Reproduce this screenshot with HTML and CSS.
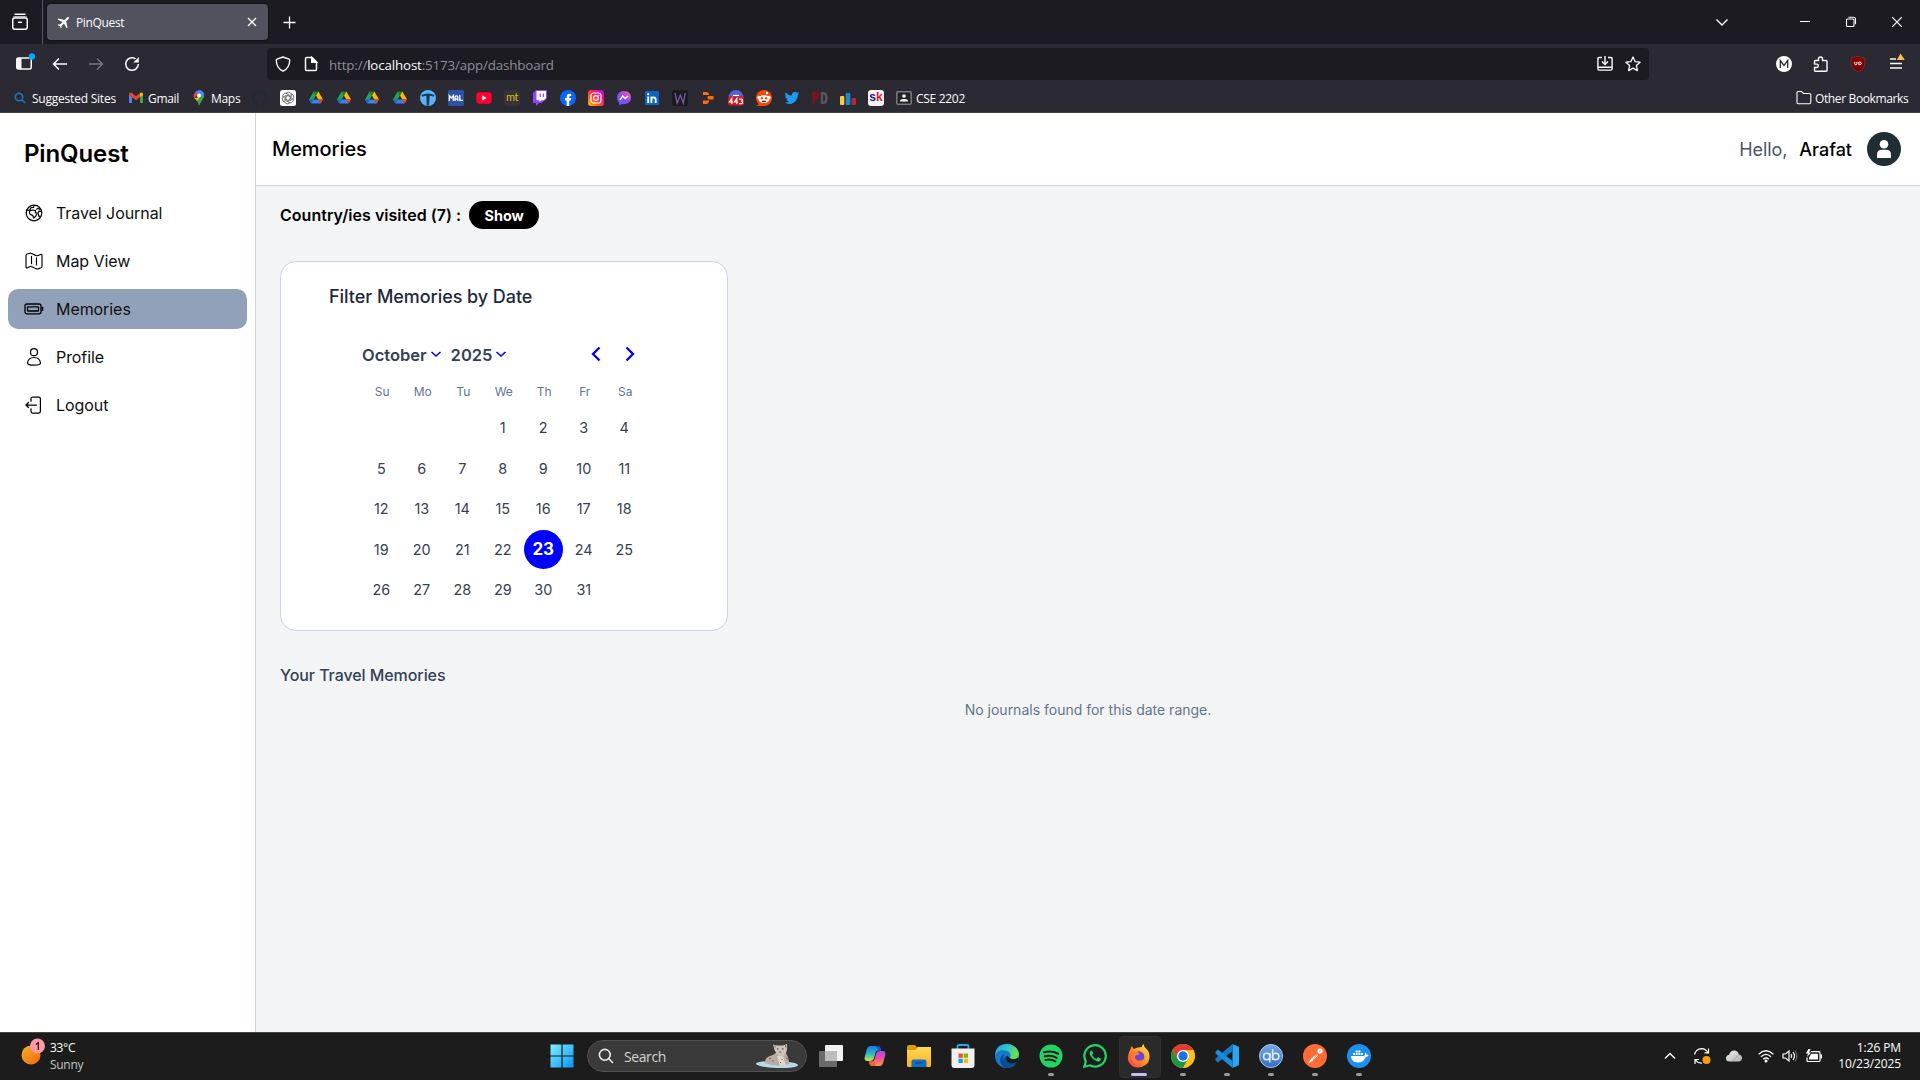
FILE: index.html
```html
<!DOCTYPE html>
<html lang="en">
<head>
<meta charset="utf-8">
<title>PinQuest</title>
<link rel="stylesheet" href="styles.css">
</head>
<body>
<svg width="0" height="0" class="defs" aria-hidden="true">
  <defs>
    <linearGradient id="win" x1="0" y1="0" x2="1" y2="1"><stop offset="0" stop-color="#7df0ff"/><stop offset="1" stop-color="#0a94f5"/></linearGradient>
    <linearGradient id="sun" x1="0" y1="0" x2="1" y2="1"><stop offset="0" stop-color="#f5b42c"/><stop offset="1" stop-color="#ee650a"/></linearGradient>
    <linearGradient id="insta" x1="0" y1="1" x2="1" y2="0"><stop offset="0" stop-color="#ffc400"/><stop offset=".35" stop-color="#ff5a1f"/><stop offset=".65" stop-color="#ff0f7b"/><stop offset="1" stop-color="#c800ff"/></linearGradient>
    <linearGradient id="msgr" x1="0" y1="1" x2="1" y2="0"><stop offset="0" stop-color="#3b6bff"/><stop offset=".5" stop-color="#9a42ff"/><stop offset="1" stop-color="#ff6a7b"/></linearGradient>
    <linearGradient id="edge1" x1="0" y1="0" x2="1" y2=".4"><stop offset="0" stop-color="#1c9be0"/><stop offset=".5" stop-color="#2cc3d0"/><stop offset="1" stop-color="#6be04c"/></linearGradient>
    <linearGradient id="fox" x1="1" y1="0" x2="0" y2="1"><stop offset="0" stop-color="#fff04a"/><stop offset=".45" stop-color="#ff9a1f"/><stop offset="1" stop-color="#ff2a55"/></linearGradient>
    <linearGradient id="fold" x1="0" y1="0" x2="0" y2="1"><stop offset="0" stop-color="#ffd95a"/><stop offset="1" stop-color="#f7b21a"/></linearGradient>
    <linearGradient id="copA" x1="0" y1="0" x2="0" y2="1"><stop offset="0" stop-color="#1b7be8"/><stop offset=".5" stop-color="#25b8c8"/><stop offset="1" stop-color="#d8e040"/></linearGradient>
    <linearGradient id="copB" x1="0" y1="0" x2="0" y2="1"><stop offset="0" stop-color="#a04cf0"/><stop offset=".5" stop-color="#f0509a"/><stop offset="1" stop-color="#ff9a4a"/></linearGradient>
    <linearGradient id="qb" x1="0" y1="0" x2="0" y2="1"><stop offset="0" stop-color="#74a8ea"/><stop offset="1" stop-color="#356ebf"/></linearGradient>
    <linearGradient id="cloud" x1="0" y1="0" x2="1" y2="1"><stop offset="0" stop-color="#f4f4f4"/><stop offset="1" stop-color="#b0b0b0"/></linearGradient>
  </defs>
  <symbol id="drive" viewBox="0 0 16 16">
    <path d="M5.600 1.500 1 9.500l2.200 4 4.800-8z" fill="#1fa551"/>
    <path d="M5.600 1.500h4.800L8 5.600z" fill="#14803c"/>
    <path d="M10.400 1.500 15 9.500h-4.700L8 5.500z" fill="#ffba00"/>
    <path d="M15 9.500l-2.300 4-2.400-4z" fill="#ea4335"/>
    <path d="M5.600 9.500h4.700l2.400 4H3.200z" fill="#3f7ff0"/>
    <path d="M1 9.500h4.600l-2.400 4z" fill="#1a62d6"/>
  </symbol>
</svg>

<header class="tabs">
  <svg class="tabs-view" width="18" height="18" viewBox="0 0 18 18" fill="none" stroke="#fbfbfe" stroke-width="1.500"><path d="M4 1.300h10" stroke-linecap="round"/><path d="M2 4.200q.6-.4 1.500-.4h11q.9 0 1.500.4" stroke-width="1"/><rect x="1.750" y="5" width="14.500" height="11.200" rx="2"/><path d="M7 9.300h4"/></svg>
  <div class="tab">
    <svg width="16" height="16" viewBox="0 0 24 24" fill="#fff"><path transform="rotate(45 12 12)" d="M21.500 16v-2l-8-5V3.500a1.500 1.500 0 0 0-3 0V9l-8 5v2l8-2.500V19l-2 1.500V22l3.500-1 3.500 1v-1.500l-2-1.500v-5.500z"/></svg>
    <span class="tab-title">PinQuest</span>
    <svg width="10" height="10" viewBox="0 0 10 10" stroke="#fbfbfe" stroke-width="1.300"><path d="M1 1l8 8M9 1l-8 8"/></svg>
  </div>
  <svg class="tab-new" width="13" height="13" viewBox="0 0 13 13" stroke="#fbfbfe" stroke-width="1.300"><path d="M6.500 .5v12M.5 6.500h12"/></svg>
  <div class="win-buttons">
    <svg width="14" height="14" viewBox="0 0 14 14" fill="none" stroke="#fbfbfe" stroke-width="1.400"><path d="M1.500 4.500 7 10l5.500-5.500"/></svg>
    <svg width="12" height="12" viewBox="0 0 12 12" stroke="#fff"><path d="M1 5.500h10"/></svg>
    <svg width="12" height="12" viewBox="0 0 12 12" fill="none" stroke="#fff" stroke-width="1.100"><rect x="1.500" y="3" width="7.500" height="7.500" rx="1"/><path d="M3.500 1.300h5q2 0 2 2v5"/></svg>
    <svg width="12" height="12" viewBox="0 0 12 12" stroke="#fff" stroke-width="1.200"><path d="M1.200 1.200l9.600 9.600M10.800 1.200l-9.600 9.600"/></svg>
  </div>
</header>

<nav class="toolbar">
  <div class="nav-buttons">
    <svg width="20" height="20" viewBox="0 0 20 20"><rect x="1.750" y="5" width="14.500" height="11" rx="1.500" fill="none" stroke="#fbfbfe" stroke-width="1.500"/><path d="M2 5h4.500v11H2z" fill="#fbfbfe"/><circle cx="17" cy="3.500" r="3.200" fill="#00a8ff"/></svg>
    <svg width="16" height="16" viewBox="0 0 16 16" fill="none" stroke="#fbfbfe" stroke-width="1.500"><path d="M15 8H1.800M7 2.500 1.500 8 7 13.500"/></svg>
    <svg width="16" height="16" viewBox="0 0 16 16" fill="none" stroke="#76757e" stroke-width="1.500"><path d="M1 8h13.200M9 2.500 14.500 8 9 13.500"/></svg>
    <svg width="16" height="16" viewBox="0 0 16 16" fill="none" stroke="#fbfbfe" stroke-width="1.500"><path d="M14.300 8A6.300 6.300 0 1 1 11.500 2.800"/><path d="M14.800 1v5.500H9.300z" fill="#fbfbfe" stroke="none"/></svg>
  </div>
  <div class="urlbar">
    <svg width="16" height="16" viewBox="0 0 16 16" fill="none" stroke="#fbfbfe" stroke-width="1.400"><path d="M8 1 L14 3.200Q14.800 3.500 14.700 4.500 14.500 12 8 15.200 1.500 12 1.300 4.500 1.200 3.500 2 3.200Z" stroke-linejoin="round"/></svg>
    <svg width="16" height="16" viewBox="0 0 16 16" fill="none" stroke="#fbfbfe" stroke-width="1.500"><path d="M9 1.500H3.800q-1.300 0-1.300 1.300v10.400q0 1.300 1.300 1.300h8.400q1.300 0 1.300-1.300V6z" stroke-linejoin="round"/><path d="M8.700 1.500V6.200h4.800z" fill="#fbfbfe"/></svg>
    <span class="url">http://<b>localhost</b>:5173/app/dashboard</span>
    <svg width="16" height="16" viewBox="0 0 16 16" fill="none" stroke="#fbfbfe" stroke-width="1.400"><path d="M5 1.500H2.200q-1.300 0-1.300 1.300v10q0 1.300 1.300 1.300h11.600q1.300 0 1.300-1.300v-10q0-1.300-1.300-1.300H11M1 11.300h14M8 0v8M5 5.600l3 3 3-3"/></svg>
    <svg width="16" height="16" viewBox="0 0 16 16" fill="none" stroke="#fbfbfe" stroke-width="1.300" stroke-linejoin="round"><path d="M8 1l2.100 4.600 5 .6-3.700 3.400 1 5L8 12.100l-4.400 2.500 1-5L.9 6.200l5-.6z"/></svg>
  </div>
  <div class="extensions">
    <svg width="16" height="16" viewBox="0 0 16 16"><circle cx="8" cy="8" r="8" fill="#fff"/><path d="M4.300 12V4.500L8 9.500l3.700-5V12" fill="none" stroke="#2b2a33" stroke-width="1.300"/></svg>
    <svg width="16" height="16" viewBox="0 0 16 16" fill="none" stroke="#fbfbfe" stroke-width="1.400" stroke-linejoin="round"><path d="M5.500 4.500V3q0-2 2-2t2 2v1.500h3.700q.8 0 .8.800v9.200q0 .7-.8.700H2.300q-.8 0-.8-.7v-3h2.200q1.600 0 1.600-1.700T3.700 8.100H1.500V5.300q0-.8.800-.8z"/></svg>
    <svg width="16" height="16" viewBox="0 0 16 16"><path d="M8 0q3 2 6.700 2v5.500Q14.500 13 8 16 1.500 13 1.300 7.500V2Q5 2 8 0z" fill="#800000" stroke="#a54" stroke-width=".4"/><path d="M4.700 5.800v2q0 1 1.100 1T6.900 7.800v-2M8.800 6v2.700h.8q1.700 0 1.700-1.350T9.600 6z" fill="none" stroke="#fff" stroke-width="1"/></svg>
    <svg width="18" height="18" viewBox="0 0 18 18"><path d="M3 6h6M3 10.500h12M3 15h12" stroke="#fbfbfe" stroke-width="1.500"/><path d="M13.500 0.500 17.800 7H9.800z" fill="#ffbd4f"/></svg>
  </div>
</nav>

<div class="bookmarks">
  <svg width="16" height="16" viewBox="0 0 16 16" fill="none" stroke="#1b75bb" stroke-width="1.700"><circle cx="7" cy="7" r="3.700"/><path d="M9.800 9.800 13 13"/></svg><span class="bm-label bm-sites">Suggested Sites</span>
  <svg width="16" height="16" viewBox="0 0 16 16"><path d="M1 3.500v9.500h3V7z" fill="#4285f4"/><path d="M12 7v6h3V3.500z" fill="#34a853"/><path d="M1 3.800Q1.500 1.500 4 3l4 3.200L12 3v4L8 10.200 1 5z" fill="#ea4335"/><path d="M12 3q2.500-1.500 3 .8V5l-3 2.300z" fill="#fbbc04"/></svg><span class="bm-label bm-gmail">Gmail</span>
  <svg width="16" height="16" viewBox="0 0 16 16"><path d="M3 4.500Q4.500.2 8 .2L10 .5 6 5 3.500 8Q2 6.500 3 4.500z" fill="#4285f4"/><path d="M3 4.200 5.500 2l1.700 2-3.800 4Q2 6 3 4.200z" fill="#ea4335"/><path d="M13 3.500q1 3-1.500 6L8 15.800Q7.500 12 5 9.500z" fill="#34a853"/><path d="M3.500 8 9 7l-3 4z" fill="#fbbc04"/><path d="M8 .2q4 .2 5.300 4L9 7.500 7 4z" fill="#4a8af4"/><circle cx="8" cy="5.500" r="2" fill="#fff"/></svg><span class="bm-label bm-maps">Maps</span>
  <div class="bm-icons">
    <svg width="16" height="16" viewBox="0 0 16 16" fill="#24292f"><path d="M8 0C3.580 0 0 3.580 0 8c0 3.540 2.290 6.530 5.470 7.590.4.070.55-.17.55-.38v-1.490c-2.230.48-2.700-1.070-2.700-1.070-.36-.92-.89-1.170-.89-1.170-.73-.5.060-.49.060-.49.800.06 1.230.83 1.230.83.710 1.230 1.870.87 2.330.67.070-.52.280-.87.500-1.070-1.770-.2-3.640-.89-3.640-3.950 0-.87.310-1.590.82-2.150-.08-.2-.36-1.020.08-2.120 0 0 .67-.21 2.200.82a7.600 7.600 0 0 1 4 0c1.530-1.040 2.200-.82 2.200-.82.440 1.100.16 1.920.08 2.120.51.560.82 1.270.82 2.150 0 3.070-1.870 3.750-3.650 3.950.29.250.54.730.54 1.480v2.200c0 .21.150.46.550.38A8 8 0 0 0 8 0z"/></svg>
    <svg width="16" height="16" viewBox="0 0 16 16"><rect width="16" height="16" rx="2.500" fill="#fff"/><g fill="none" stroke="#444" stroke-width=".7"><path id="petal" d="M6 3.200q2-2 4.200-.6 1.300 1 1 2.800v3.300L8 10.400"/><use href="#petal" transform="rotate(60 8 8)"/><use href="#petal" transform="rotate(120 8 8)"/><use href="#petal" transform="rotate(180 8 8)"/><use href="#petal" transform="rotate(240 8 8)"/><use href="#petal" transform="rotate(300 8 8)"/></g></svg>
    <svg width="16" height="16"><use href="#drive"/></svg>
    <svg width="16" height="16"><use href="#drive"/></svg>
    <svg width="16" height="16"><use href="#drive"/></svg>
    <svg width="16" height="16"><use href="#drive"/></svg>
    <svg width="16" height="16" viewBox="0 0 16 16"><circle cx="8" cy="8" r="8" fill="#5eb1f5"/><path d="M1.500 5Q8 2 14.500 5l-.7 1.800Q12 5.800 9.800 5.700L9 15.500H6.800L6.300 5.700Q4 5.800 2.200 6.800z" fill="#173a5c"/></svg>
    <svg width="16" height="16" viewBox="0 0 16 16"><rect width="16" height="16" rx="1.500" fill="#2e51a2"/><path d="M1.300 11V5.500l2 2.500 2-2.500V11M7 11V7.500q0-1.700 1.400-1.700t1.400 1.700V11M7 9h2.800M11.800 5v5.300h3" fill="none" stroke="#fff" stroke-width="1.300"/></svg>
    <svg width="16" height="16" viewBox="0 0 16 16"><rect x=".3" y="2.300" width="15.400" height="11.400" rx="3" fill="#ff0033"/><path d="M6.300 5.500v5L10.700 8z" fill="#fff"/></svg>
    <span class="mt">mt</span>
    <svg width="16" height="16" viewBox="0 0 16 16"><path d="M4 0h11v8.500L9.500 13H7l-3 3v-3H1V3z" fill="#8e44ff"/><path d="M4.500 1H14v7l-2.200 2.200H9.500L7.500 12v-1.800h-3z" fill="#fff"/><path d="M8.200 3.500v3.500M11.400 3.500v3.500" stroke="#8e44ff" stroke-width="1.200"/></svg>
    <svg width="16" height="16" viewBox="0 0 16 16"><circle cx="8" cy="8" r="8" fill="#0866ff"/><path d="M6.700 16v-5.500H5V8h1.700V6.900q0-3.200 3-3.200.8 0 1.500.2v2.200h-.9q-1.100 0-1.100 1V8h2l-.4 2.500H9.200V16z" fill="#fff"/></svg>
    <svg width="16" height="16" viewBox="0 0 16 16"><rect width="16" height="16" rx="3" fill="url(#insta)"/><g fill="none" stroke="#fff" stroke-width="1.200"><rect x="3" y="3" width="10" height="10" rx="2.800"/><circle cx="8" cy="8" r="2.400"/></g><circle cx="10.900" cy="5.100" r=".7" fill="#fff"/></svg>
    <svg width="16" height="16" viewBox="0 0 16 16"><path d="M8 1q7 .3 7 6.500T8 14.200l-1.500-.2L3 15.300v-2.500Q1 10.500 1 7.500 1.300 1.300 8 1z" fill="url(#msgr)"/><path d="M4 9.800 6.600 6l2.600 2.500L12 6" fill="none" stroke="#fff" stroke-width="1.500"/></svg>
    <svg width="16" height="16" viewBox="0 0 16 16"><rect x="1" y="1" width="14" height="14" rx="1" fill="#0a66c2"/><path d="M4.200 6.500V13M7.400 13V6.500M7.500 9.500q.2-2.200 2.200-2.200t2 2.500V13" fill="none" stroke="#fff" stroke-width="1.800"/><circle cx="4.200" cy="4.200" r="1.100" fill="#fff"/></svg>
    <svg width="16" height="16" viewBox="0 0 16 16"><rect width="16" height="16" rx="2.500" fill="#1b1b1d"/><path d="M3 3l2.200 10L8.300 5l3 8L13.200 3" fill="none" stroke="#7957b5" stroke-width="1.300"/></svg>
    <svg width="16" height="16" viewBox="0 0 16 16" fill="#ff6a0a"><path d="M3 2h4l2 1.500V5H3zM8.500 6H13.500v3.500H8.500L7 7.800zM3 10.500h6V12l-2 2H3z"/></svg>
    <svg width="16" height="16" viewBox="0 0 16 16"><circle cx="8" cy="7.500" r="7.500" fill="#4f63d9"/><path d="M5 5.500h6" stroke="#fff" stroke-width="1.200"/><rect x="0" y="6.500" width="16" height="9" rx="2" fill="#d9141e"/><path d="M3.800 14V8.500L1.500 12h3.500M8.800 14V8.500L6.500 12H10M11 9h2.500q.9 0 .9 1t-1 1.200q1.200.2 1.200 1.300T13.500 13.700H11" fill="none" stroke="#fff" stroke-width="1.200"/></svg>
    <svg width="16" height="16" viewBox="0 0 16 16"><circle cx="8" cy="8" r="8" fill="#ff4500"/><path d="M0 16h8v-5z" fill="#ff4500"/><ellipse cx="8" cy="9" rx="5.600" ry="4" fill="#fff"/><circle cx="2.700" cy="7.500" r="1.500" fill="#fff"/><circle cx="13.300" cy="7.500" r="1.500" fill="#fff"/><circle cx="11" cy="3" r="1.200" fill="#fff"/><circle cx="5.900" cy="8.300" r="1.200" fill="#ff4500"/><circle cx="10.100" cy="8.300" r="1.200" fill="#ff4500"/><path d="M5.500 10.800h5q-.8 1.500-2.500 1.500t-2.500-1.500" fill="#222"/></svg>
    <svg width="16" height="16" viewBox="0 0 24 24" fill="#1d9bf0"><path d="M23 4.900a9 9 0 0 1-2.600.7 4.500 4.500 0 0 0 2-2.500 9 9 0 0 1-2.900 1.100 4.500 4.500 0 0 0-7.700 4.100A12.800 12.800 0 0 1 2.500 3.600a4.500 4.500 0 0 0 1.400 6 4.500 4.500 0 0 1-2-.5 4.500 4.500 0 0 0 3.600 4.500 4.500 4.500 0 0 1-2 .1 4.500 4.500 0 0 0 4.200 3.100A9 9 0 0 1 1 18.700 12.800 12.800 0 0 0 20.700 7.300 9 9 0 0 0 23 4.900z"/></svg>
    <svg width="16" height="16" viewBox="0 0 16 16" fill="none" stroke-width="2.400"><path d="M1.700 14V3.200h2.500q1.800 0 1.800 2.300t-1.800 2.400H2" stroke="#8b1016"/><path d="M10 3.200v9.600h1.600q2.800 0 2.800-4.800t-2.800-4.800z" stroke="#57565b"/></svg>
    <svg width="16" height="16" viewBox="0 0 16 16"><rect x="0" y="6" width="4.300" height="9" rx="1" fill="#f6c945"/><rect x="5.700" y="3" width="4.600" height="12" rx="1" fill="#1c8dc4"/><rect x="11.700" y="8" width="4.300" height="7" rx="1" fill="#b3293a"/></svg>
    <span class="sk"><span>s</span><em>k</em></span>
    <svg width="16" height="16" viewBox="0 0 16 16"><rect x=".8" y="1.800" width="14.400" height="12.400" rx="1" fill="#222" stroke="#77767c" stroke-width="1.600"/><circle cx="8" cy="6" r="1.800" fill="#fff"/><path d="M4 11q0-2 4-2t4 2v.5H4z" fill="#fff"/></svg>
  </div>
  <span class="bm-label bm-cse">CSE 2202</span>
  <svg class="bm-folder" width="16" height="16" viewBox="0 0 16 16" fill="none" stroke="#fbfbfe" stroke-width="1.100"><path d="M1 12.500v-10q0-1 1-1h3.500L7.500 3.500h6q1.300 0 1.300 1.200v7.800q0 1.200-1.200 1.200H2.200Q1 13.700 1 12.500z"/></svg>
  <span class="bm-label bm-other">Other Bookmarks</span>
</div>

<main class="app">
  <aside class="sidebar">
    <h1 class="brand">PinQuest</h1>
    <a class="side-item"><svg width="20" height="20" viewBox="0 0 20 20" fill="none" stroke="#000" stroke-width="1.200" stroke-linejoin="round"><circle cx="10" cy="10" r="7.800"/><path d="M2.800 7l2.700.3L7 4.700l2.500-.2.500-2.200M6 7.600 8.800 7l2.700.6-.3 1.900 1.900.8-1.600 3.300L9.600 15l-.9-2.600-2.600-1L5.400 9z"/><path d="M12 6.300l2.500-.8 1.700 1M17.600 8.600l-2.800-.4-.8 1.700 1 3.700 1.600-.6"/></svg><span>Travel Journal</span></a>
    <a class="side-item"><svg width="20" height="20" viewBox="0 0 20 20" fill="none" stroke="#000" stroke-width="1.150" stroke-linejoin="round" stroke-linecap="round"><path d="M2 4.500q0-1.200 1.200-1.500l2.600-.8q.7-.2 1.300.1l5.200 2.300q.6.300 1.200.1l3-1.200q1.500-.6 1.500.9v11q0 1-1 1.400l-3 1.100q-.7.200-1.300 0l-5.300-2.400q-.6-.3-1.200 0l-2.700 1.200Q2 17.300 2 15.800zM7.500 5.300v7.400M12.500 6.800v7.200"/></svg><span>Map View</span></a>
    <a class="side-item active"><svg width="20" height="20" viewBox="0 0 20 20" fill="none" stroke="#000" stroke-width="1.300"><rect x="1" y="5" width="16" height="9.800" rx="2"/><rect x="3.500" y="7.800" width="11" height="4.200" rx=".4"/><path d="M18.400 7.800v4" stroke-width="1.800"/></svg><span>Memories</span></a>
    <a class="side-item"><svg width="20" height="20" viewBox="0 0 20 20" fill="none" stroke="#000" stroke-width="1.200"><circle cx="10" cy="5.200" r="3.500"/><path d="M3.500 16q.7-5.500 6.500-5.500t6.500 5.500q0 2.200-6.500 2.200T3.500 16z"/></svg><span>Profile</span></a>
    <a class="side-item"><svg width="20" height="20" viewBox="0 0 20 20" fill="none" stroke="#000" stroke-width="1.250" stroke-linecap="round" stroke-linejoin="round"><path d="M7 6.200V3.700Q7 2 8.700 2h6q1.700 0 1.700 1.700v12.600q0 1.700-1.700 1.700h-6Q7 18 7 16.300v-2.500M12.500 10H2.300M4.500 7.500 2 10l2.500 2.500"/></svg><span>Logout</span></a>
  </aside>
  <section class="content">
    <header class="page-head">
      <h2>Memories</h2>
      <span class="hello">Hello,</span>
      <strong class="user">Arafat</strong>
      <svg width="34" height="34" viewBox="0 0 34 34"><circle cx="17" cy="17" r="17" fill="#1f2f33"/><circle cx="17" cy="12.200" r="4.300" fill="#fff"/><path d="M10 26v-3.300q0-5 5-5h4q5 0 5 5V26z" fill="#fff"/></svg>
    </header>
    <div class="visited"><strong>Country/ies visited (7) :</strong><button class="show">Show</button></div>
    <article class="card">
      <h3>Filter Memories by Date</h3>
      <div class="calendar">
        <div class="cal-head">
          <span class="month">October</span>
          <svg width="12" height="12" viewBox="0 0 12 12" fill="none" stroke="#00f" stroke-width="1.600"><path d="M1.500 4 6 8l4.500-4"/></svg>
          <span class="year">2025</span>
          <svg width="12" height="12" viewBox="0 0 12 12" fill="none" stroke="#00f" stroke-width="1.600"><path d="M1.500 4 6 8l4.500-4"/></svg>
          <svg class="prev" width="16" height="16" viewBox="0 0 16 16" fill="none" stroke="#00f" stroke-width="2.300"><path d="M11.500 1.500 5 8l6.500 6.500"/></svg>
          <svg class="next" width="16" height="16" viewBox="0 0 16 16" fill="none" stroke="#00f" stroke-width="2.300"><path d="M4.500 1.500 11 8l-6.500 6.500"/></svg>
        </div>
        <div class="week names"><span>Su</span><span>Mo</span><span>Tu</span><span>We</span><span>Th</span><span>Fr</span><span>Sa</span></div>
        <div class="week"><span></span><span></span><span></span><span>1</span><span>2</span><span>3</span><span>4</span></div>
        <div class="week"><span>5</span><span>6</span><span>7</span><span>8</span><span>9</span><span>10</span><span>11</span></div>
        <div class="week"><span>12</span><span>13</span><span>14</span><span>15</span><span>16</span><span>17</span><span>18</span></div>
        <div class="week"><span>19</span><span>20</span><span>21</span><span>22</span><span><b class="today">23</b></span><span>24</span><span>25</span></div>
        <div class="week"><span>26</span><span>27</span><span>28</span><span>29</span><span>30</span><span>31</span><span></span></div>
      </div>
    </article>
    <h4 class="list-title">Your Travel Memories</h4>
    <p class="empty">No journals found for this date range.</p>
  </section>
</main>

<footer class="taskbar">
  <div class="weather">
    <svg width="28" height="30" viewBox="0 0 28 30"><circle cx="11" cy="17" r="9.500" fill="url(#sun)"/><circle cx="17.500" cy="8" r="7.500" fill="#ff99a4"/><path d="M16 6.500l2.300-1.800V12" fill="none" stroke="#111" stroke-width="1.200"/></svg>
    <div><div>33°C</div><div class="dim">Sunny</div></div>
  </div>
  <div class="dock">
    <span class="app-cell"><svg width="24" height="24" viewBox="0 0 24 24" fill="url(#win)"><path d="M.5.500h23v23H.5z"/><path d="M12 0v24M0 12h24" stroke="#1c1c1c" stroke-width="1.200"/></svg></span>
    <div class="search">
      <svg width="16" height="16" viewBox="0 0 16 16" fill="none" stroke="#e8e8e8" stroke-width="1.600"><circle cx="6.800" cy="6.800" r="5.400"/><path d="M10.800 10.800 15 15"/></svg>
      <span>Search</span>
      <svg class="cat" width="44" height="26" viewBox="0 0 44 26"><ellipse cx="22" cy="21.500" rx="21" ry="3.400" transform="rotate(2 22 21.500)" fill="#b9dbe8"/><path d="M10 20q-1-6 8-8l4-3h8q4 5 4 12-12 4-24-1z" fill="#b9aca4"/><path d="M22 13l6 0 3 9-6 1z" fill="#ddd4cc"/><path d="M18 1.500l4 1h6l4-1.500v5.500q-.5 4-3 6-3 2-5 0-3-2-4.500-5.500z" fill="#cfc3ba"/><path d="M20 2.500v2M30.500 2v2.500M14 15l2 1M17 18h2M31 15l2 1M27 16v1M25 19l1 1" stroke="#756a66"/><path d="M22 6h1.500M27 6h1.500" stroke="#283a48" stroke-width="1.200"/><path d="M24.200 9h2" stroke="#a45e55" stroke-width="1.400"/></svg>
    </div>
    <span class="app-cell"><svg width="24" height="24" viewBox="0 0 24 24"><rect x="6" y="1" width="18" height="16" rx="1" fill="#f2f2f2"/><rect x="0" y="7" width="18" height="16" rx="1" fill="#6a6a6a"/><path d="M6 7h12v10H6z" fill="#bdbdbd"/></svg></span>
    <span class="app-cell"><svg width="24" height="24" viewBox="0 0 24 24"><path d="M7.500 2h7q2.500 0 3.200 3l.4 1.500h-3q-2 0-2.600 2.200l-1.700 6Q10 17 7 17H4.200Q1 17 1.700 13l2-7.500Q4.700 2 7.500 2z" fill="url(#copA)"/><path d="M16.500 22h-7Q7 22 6.300 19l-.4-1.500h3q2 0 2.600-2.200l1.700-6Q14 7 17 7h2.800q3.200 0 2.500 4l-2 7.500q-1 3.500-3.800 3.500z" fill="url(#copB)"/><path d="M12.500 2h2q2.500 0 3.200 3l.5 2H16q-2-3-3.500-5z" fill="#1856c8"/><path d="M5.900 17.500h3q1 0 1.800-1l2 5.500H9.500Q7 22 6.300 19z" fill="#f4662a"/></svg></span>
    <span class="app-cell"><svg width="24" height="24" viewBox="0 0 24 24"><path d="M0 3q0-2 2-2h6l2.500 3v4H0z" fill="#dd9b0b"/><path d="M0 6h8.500l2-3H24v18.500q0 1.500-1.500 1.500h-21Q0 23 0 21.500z" fill="url(#fold)"/><path d="M4.500 23v-5.500q0-2 2-2h11q2 0 2 2V23z" fill="#0f6fc0"/><path d="M8 19h8" stroke="#084c8f" stroke-width="1.500"/></svg></span>
    <span class="app-cell"><svg width="24" height="24" viewBox="0 0 24 24"><path d="M6.500 5V2.500q0-1.500 1.500-1.500h8q1.500 0 1.500 1.500V5" fill="none" stroke="#22a6ee" stroke-width="1.800"/><path d="M.5 4.500h23V21q0 3-3 3h-17q-3 0-3-3z" fill="#f0f0f0"/><path d="M7.500 9.500h4.300v4.300H7.500z" fill="#f25022"/><path d="M12.700 9.500H17v4.300h-4.300z" fill="#7fba00"/><path d="M7.500 14.700h4.300V19H7.500z" fill="#00a4ef"/><path d="M12.700 14.700H17V19h-4.300z" fill="#ffb900"/></svg></span>
    <span class="app-cell"><svg width="24" height="24" viewBox="0 0 24 24"><circle cx="12" cy="12" r="12" fill="#1478cc"/><path d="M0 11Q1 0 12 0q8 0 11.500 7.500 1.500 5-2.200 7-3.300 1.700-6.800-.3 1.500-1.500 1-3.500Q14.500 6.800 9 6.300 3 6 0 11z" fill="url(#edge1)"/><path d="M9.500 10q-3 6 2 10.500 5 3.500 10.500-1.500Q18 24 12 24 6 23 5 17q0-5 4.500-7z" fill="#0b4a94"/><path d="M15 14.200q3.500 2.500 7.800-.5L24 18l-3 2.500q-6 1.500-9-2-2-3 0-7z" fill="#1c1c1c"/><path d="M11.700 11.500q-2 5 3 7.500 3.500 1 7.300-1-3.500 5-9 3.500-4.500-2-3.800-7.500z" fill="#0b4a94"/></svg></span>
    <span class="app-cell run"><svg width="24" height="24" viewBox="0 0 24 24"><circle cx="12" cy="12" r="11.500" fill="#1ed760"/><path d="M5 8.300q7.500-2 14.200 1.500M5.700 12.300q6.500-1.700 12 1.500M6.400 16q5.300-1.400 10 1.300" fill="none" stroke="#1c1c1c" stroke-width="2.100" stroke-linecap="round"/></svg></span>
    <span class="app-cell"><svg width="24" height="24" viewBox="0 0 24 24"><path d="M1.300 22.700l1.500-5.500A10.700 10.700 0 1 1 7 21.300z" fill="none" stroke="#25d366" stroke-width="2.200"/><path d="M8.300 6.500q-2.800 2-.8 5.500 2.300 4 6.500 5.500 3.500.5 4-2.800l-3-1.600-1.500 1.800q-3-1-4.500-4l1.200-1.600L9 6.500z" fill="#25d366"/></svg></span>
    <span class="app-cell current"><svg width="24" height="24" viewBox="0 0 24 24"><path d="M3.500 5q.5-2 1.500-3 .5 2 2 3 2-1.500 4-1.500L15 3q0-2 1.500-3 .5 3 3 5t3 7q.3 6-4 9t-8.500 2.500q-6-.5-8.500-6-2-6 2-12.500z" fill="url(#fox)"/><circle cx="12" cy="12.500" r="5.300" fill="#7043d8"/><path d="M4.500 9q4-3 8 .5 0 1.500-3 1.700-2.500 1-1 3.800 3 3 7.500.5-2 5-7.500 4-5-2-4-10.500z" fill="#ff7a2a"/></svg></span>
    <span class="app-cell run"><svg width="24" height="24" viewBox="0 0 24 24"><circle cx="12" cy="12" r="12" fill="#fbc116"/><path d="M1.600 6A12 12 0 0 1 22.400 6H12L7 15z" fill="#e33b2e"/><path d="M1.600 6A12 12 0 0 0 12 24l5.200-9H6.800z" fill="#229342"/><path d="M12 6h10.400q3.500 8.500-3 14.500Q16 24 12 24l5.200-9z" fill="#fbc116"/><circle cx="12" cy="12" r="6" fill="#fff"/><circle cx="12" cy="12" r="4.700" fill="#1a73e8"/></svg></span>
    <span class="app-cell run"><svg width="24" height="24" viewBox="0 0 24 24"><path d="M17.500 0 24 3v18l-6.500 3z" fill="#2aa7f3"/><path d="M17.500 0v7L3 18.500.5 16.500v-2z" fill="#137acb"/><path d="M17.500 24v-7L3 5.500.5 7.500v2z" fill="#1b8cdd"/></svg></span>
    <span class="app-cell run"><svg width="24" height="24" viewBox="0 0 24 24"><circle cx="12" cy="12" r="11.500" fill="url(#qb)" stroke="#a8c8f2"/><g fill="none" stroke="#dcebff" stroke-width="1.600"><circle cx="7.700" cy="12.500" r="3.200"/><path d="M10.900 9v9.500M13.600 5v11"/><circle cx="16.700" cy="12.500" r="3.200"/></g></svg></span>
    <span class="app-cell run"><svg width="24" height="24" viewBox="0 0 24 24"><circle cx="12" cy="12" r="12" fill="#ff6c37"/><path d="M5 19.500 8 15l5.500-5 1.500 1.500-5.500 5.500z" fill="#fff"/><circle cx="17" cy="7" r="2.600" fill="#fff"/><path d="M14 10l-4 6M16 7.500l2-1" stroke="#ff6c37" stroke-width=".7"/></svg></span>
    <span class="app-cell run"><svg width="24" height="24" viewBox="0 0 24 24"><circle cx="12" cy="12" r="12" fill="#1d8fee"/><path d="M4 12h13q1.500-1 1-3.500 1.500.8 1.800 2.200 1.200-.2 2 .3-1 2-3 2-2 5.500-8 5.500-6.500 0-6.800-6.500z" fill="#fff"/><path d="M6 9h2v2H6zM8.700 9h2v2h-2zM11.400 9h2v2h-2zM14 9h2v2h-2zM8.700 6.500h2v2h-2zM11.400 6.500h2v2h-2z" fill="#fff"/></svg></span>
  </div>
  <div class="tray">
    <span class="w32"><svg width="12" height="12" viewBox="0 0 12 12" fill="none" stroke="#fff" stroke-width="1.400"><path d="M1 8.500 6 3.500l5 5"/></svg></span>
    <span class="w32"><svg width="18" height="18" viewBox="0 0 18 18" fill="none" stroke="#fff" stroke-width="1.200"><path d="M1.500 7.500Q3 2 8.500 1.700q4 0 6.500 4M15.500 1.500v4.300h-4M9 16Q5 16.500 2.500 13M2 17v-4.500h4"/><circle cx="13.500" cy="13" r="4" fill="#ff9a0a" stroke="none"/></svg></span>
    <span class="w32"><svg width="16" height="12" viewBox="0 0 16 12" fill="url(#cloud)"><path d="M3.500 11.500Q0 11.500 0 8.300 0 5.500 3 4.800 4.500.5 8.300.5q3.500 0 4.700 4 3 .5 3 3.500t-3 3.500z"/><path d="M6 11.500 13 4.500" stroke="#999" stroke-width=".8"/></svg></span>
    <span class="w24 net"><svg width="16" height="14" viewBox="0 0 16 14" fill="none" stroke="#fff" stroke-width="1.300"><path d="M.6 5.200q7.400-7 14.800 0M3 7.700q5-4.700 10 0M5.300 10.200q2.700-2.500 5.400 0"/><circle cx="8" cy="12" r="1.500" fill="#fff" stroke="none"/></svg></span>
    <span class="w24"><svg width="16" height="14" viewBox="0 0 16 14" fill="none" stroke="#fff" stroke-width="1.200"><path d="M1 5v4h2.500L7 12V2L3.500 5zM9 5q1.500 2 0 4M11 3.200q3 3.800 0 7.600"/><path d="M13 1.500q4 5.500 0 11" stroke="#666"/></svg></span>
    <span class="w24"><svg width="18" height="14" viewBox="0 0 18 14"><path d="M6 2.700h8q1 0 1 1v7.800q0 1-1 1H3q-1 0-1-1V8.500" fill="none" stroke="#fff" stroke-width="1.200"/><path d="M6.300 4.700H13v5.800H4V8.500z" fill="#fff"/><path d="M16.200 5.500v4" stroke="#fff" stroke-width="1.600"/><path d="M3.500 0 .8 4.500H3L2 8l4-4.500H4.200L5.500 0z" fill="#fff"/></svg></span>
    <div class="clock"><div>1:26 PM</div><div>10/23/2025</div></div>
  </div>
</footer>
</body>
</html>
```
FILE: styles.css
```css
* { box-sizing: border-box; }
body {
  margin: 0;
  width: 1920px;
  height: 1080px;
  overflow: hidden;
  display: flex;
  flex-direction: column;
  font-family: "Open Sans", "Noto Sans", sans-serif;
  font-size: 12px;
  color: #fbfbfe;
  background: #1c1b22;
}
svg { display: block; flex: none; }
.defs { position: absolute; }
h1, h2, h3, h4, p { margin: 0; font-weight: 500; }

/* Browser tab strip */
.tabs { height: 44px; flex: none; display: flex; align-items: center; background: #1c1b22; }
.tabs-view { margin-left: 11px; }
.tab {
  display: flex; align-items: center;
  width: 221px; height: 36px;
  margin-left: 18px; padding: 0 11px 0 9px;
  border-radius: 4px; background: #52525e;
  box-shadow: 0 0 2px #000;
  position: relative;
}
.tab::before { content: ""; position: absolute; left: -5px; top: -4px; width: 1px; height: 44px; background: #55545c; }
.tab-title { margin-left: 4px; flex: 1; letter-spacing: -0.35px; }
.tab-new { margin: 1px 0 0 15px; }
.win-buttons { margin-left: auto; padding-right: 17px; display: flex; align-items: center; gap: 34px; }
.win-buttons svg:first-child { margin-right: 36px; }

/* Navigation toolbar */
.toolbar { height: 40px; flex: none; display: flex; align-items: center; background: #2b2a33; }
.nav-buttons { width: 267px; padding-left: 15px; display: flex; align-items: center; gap: 20px; }
.nav-buttons svg:first-child { margin: -3px -3px 0 0; }
.urlbar {
  width: 1382px; height: 32px; padding: 0 8px;
  display: flex; align-items: center; gap: 12px;
  border-radius: 4px; background: #1c1b22;
}
.url { flex: 1; margin: 2px 0 0 -2px; font-size: 13.330px; letter-spacing: -0.14px; color: #8f8e96; }
.url b { font-weight: 400; color: #fbfbfe; }
.extensions { margin-left: auto; padding-right: 15px; display: flex; align-items: center; gap: 21px; }
.extensions svg:last-child { margin-top: -4px; }

/* Bookmarks bar */
.bookmarks {
  height: 29px; flex: none; display: flex; align-items: flex-start;
  padding: 6px 12px 0; background: #2b2a33; border-bottom: 1px solid #42414d;
}
.bm-label { margin: 0 12px 0 4px; line-height: 17px; white-space: nowrap; letter-spacing: -0.3px; }
.bm-sites { width: 84px; letter-spacing: -0.22px; }
.bm-gmail { width: 31px; }
.bm-maps { width: 29px; }
.bm-cse { margin-left: 4px; }
.bm-icons { display: flex; gap: 12px; }
.bm-folder { margin-left: auto; }
.bm-other { margin: 0 -1px 0 3px; width: 94px; letter-spacing: -0.37px; }
.mt, .sk { width: 16px; height: 16px; border-radius: 3px; font-size: 11px; line-height: 14px; text-align: center; }
.mt { background: #323437; color: #e2b714; font-family: Lato, sans-serif; letter-spacing: -0.5px; }
.sk { background: #f4f2f4; color: #171798; font: 700 12px/15px "Liberation Sans", sans-serif; }
.sk em { color: #e01a24; font-style: normal; }

/* Application */
.app { flex: 1; display: flex; min-height: 0; font-family: Inter, sans-serif; color: #000; background: #f3f4f6; }
.sidebar { width: 256px; padding: 0 8px; background: #fff; border-right: 1px solid #cbd5e1; }
.brand { margin: 25px 0 23px 16px; height: 32px; font-size: 24px; line-height: 32px; font-weight: 600; letter-spacing: -0.12px; }
.side-item {
  display: flex; align-items: center; gap: 12px;
  height: 40px; margin-bottom: 8px; padding-left: 16px;
  border-radius: 10px; font-size: 16px; letter-spacing: -0.07px; color: #0f0f10;
}
.active { background: #92a1ba; }
.content { flex: 1; }
.page-head {
  height: 73px; padding: 0 19px 0 16px;
  display: flex; align-items: center;
  background: #fff; border-bottom: 1px solid #cbd5e1;
}
.page-head h2 { flex: 1; font-size: 20px; letter-spacing: -0.08px; }
.hello { font-size: 18px; letter-spacing: -0.1px; color: #4b5563; }
.user { margin: 0 15px 0 12px; font-size: 18px; font-weight: 500; }
.visited { display: flex; align-items: center; height: 28px; margin: 15px 0 32px 24px; font-size: 16px; }
.visited strong { font-weight: 600; letter-spacing: 0.04px; }
.show {
  width: 70px; height: 28px; margin-left: 8px; padding: 1px 0 0;
  border: 0; border-radius: 14px; background: #000; color: #fff;
  font: 700 14.400px Inter, sans-serif;
}
.card {
  width: 448px; height: 370px; margin-left: 24px; padding: 23px 48px;
  border: 1px solid #cbd5e1; border-radius: 16px; background: #fff;
}
.card h3 { font-size: 18px; line-height: 24px; letter-spacing: -0.05px; color: #1e293b; }
.calendar { width: 284px; margin: 26px 0 0 32px; color: #334155; }
.cal-head { height: 40px; padding-left: 1px; display: flex; align-items: center; font-size: 16.500px; font-weight: 600; }
.cal-head svg { margin: 0 0 2px 3px; }
.year { margin-left: 9px; }
.cal-head .prev { margin-left: auto; }
.cal-head .next { margin: 0 7px 2px 18px; }
.week { display: grid; grid-template-columns: repeat(7, 40.500px); height: 40.500px; align-items: center; justify-items: center; font-size: 14.400px; }
.names { height: 32.500px; padding-left: 1px; font-size: 12px; color: #64748b; }
.today {
  display: flex; align-items: center; justify-content: center;
  width: 39px; height: 39px; border-radius: 50%;
  background: #00f; color: #fff; font-size: 17px; font-weight: 700;
}
.list-title { margin: 32px 0 0 24px; font-size: 16px; line-height: 24px; letter-spacing: -0.07px; color: #334155; }
.empty { margin-top: 13px; text-align: center; font-size: 14px; line-height: 20px; font-weight: 400; color: #64748b; }

/* Taskbar */
.taskbar { height: 48px; flex: none; display: flex; background: #1c1c1c; border-top: 1px solid #454545; color: #fff; }
.weather { width: 540px; padding-left: 20px; display: flex; line-height: 17px; letter-spacing: -0.3px; }
.weather svg { margin-top: 5px; }
.weather > div { margin: 6px 0 0 2px; }
.dim { color: #c4c4c4; }
.dock { display: flex; align-items: center; height: 46px; }
.app-cell { width: 44px; height: 46px; display: grid; place-items: center; position: relative; }
.run::after, .current::after {
  content: ""; position: absolute; left: 19px; bottom: 3px;
  width: 6px; height: 3px; border-radius: 2px; background: #9a9a9a;
}
.current::before {
  content: ""; position: absolute; left: 2px; top: 3px; width: 40px; height: 40px;
  border-radius: 4px; background: #2a2a2a; border: 1px solid #303030;
}
.current svg { position: relative; }
.current::after { left: 14px; width: 16px; background: #c5bdf0; }
.search {
  width: 220px; height: 32px; margin: 0 2px 0 3px; padding: 0 7px 0 10px;
  display: flex; align-items: center; gap: 10px;
  border: 1px solid #515151; border-radius: 16px; background: #3a3a3a;
  color: #d4d4d4; font-size: 14px; letter-spacing: -0.4px;
}
.cat { margin-left: auto; }
.tray { margin-left: auto; padding-right: 19px; display: flex; align-items: center; height: 46px; }
.tray span { display: grid; place-items: center; }
.w32 { width: 32px; }
.w24 { width: 24px; }
.net { margin-left: 4px; }
.clock { width: 75px; text-align: right; line-height: 16px; letter-spacing: -0.1px; }
```
